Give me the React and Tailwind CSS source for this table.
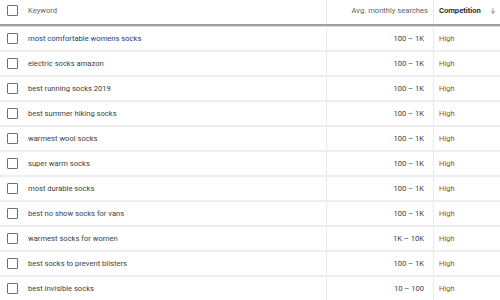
const rows = [
  ['most comfortable womens socks', '100 – 1K', true],
  ['electric socks amazon', '100 – 1K'],
  ['best running socks 2019', '100 – 1K'],
  ['best summer hiking socks', '100 – 1K'],
  ['warmest wool socks', '100 – 1K'],
  ['super warm socks', '100 – 1K'],
  ['most durable socks', '100 – 1K'],
  ['best no show socks for vans', '100 – 1K'],
  ['warmest socks for women', '1K – 10K'],
  ['best socks to prevent blisters', '100 – 1K'],
  ['best invisible socks', '10 – 100'],
];

function Box() {
  return <div className="w-[11px] h-[11px] border-[1.5px] border-[#6f6f6f] rounded-[1px] bg-white" />;
}

export default function App() {
  return (
    <div className="w-[500px] h-[300px] overflow-hidden bg-white text-[7.6px] text-[#3c4043]" style={{ fontFamily: 'Roboto, sans-serif' }}>
      <div className="grid grid-cols-[24px_302px_107px_67px] h-[24px] items-stretch">
        <div className="flex items-center pl-[7px] pb-[3px]"><Box /></div>
        <div className="flex items-center pl-[4px] pb-[3px] text-[#5f6368]">Keyword</div>
        <div className="flex items-center justify-end pr-[5px] pb-[3px] text-[#5f6368] border-l border-[#e8eaed]">Avg. monthly searches</div>
        <div className="flex items-center pl-[5px] pb-[3px] font-semibold text-[#202124] border-l border-[#e8eaed]">
          Competition
          <svg className="ml-[8px]" width="8" height="8" viewBox="0 0 24 24" fill="none" stroke="#5f6368" strokeWidth="2.2"><path d="M12 4v15M6 13l6 6 6-6" /></svg>
        </div>
      </div>
      <div className="h-[2px] bg-[#9aa0a6]" />
      <div className="h-[1px] bg-[#dadce0]" />
      {rows.map(([k, v, first], i) => (
        <div key={i} className="grid grid-cols-[24px_302px_107px_67px] h-[25px] border-b-[2px] border-[#eeeeee]">
          <div className="flex items-center pl-[7px]"><Box /></div>
          <div className={'flex items-center pl-[4px] ' + (first ? 'text-[#1f3c78]' : 'text-[#3c4043]')}>{k}</div>
          <div className="flex items-center justify-end pr-[9px] border-l border-[#e8eaed]">{v}</div>
          <div className="flex items-center pl-[5px] text-[#a0560a] border-l border-[#e8eaed]">High</div>
        </div>
      ))}
    </div>
  );
}
